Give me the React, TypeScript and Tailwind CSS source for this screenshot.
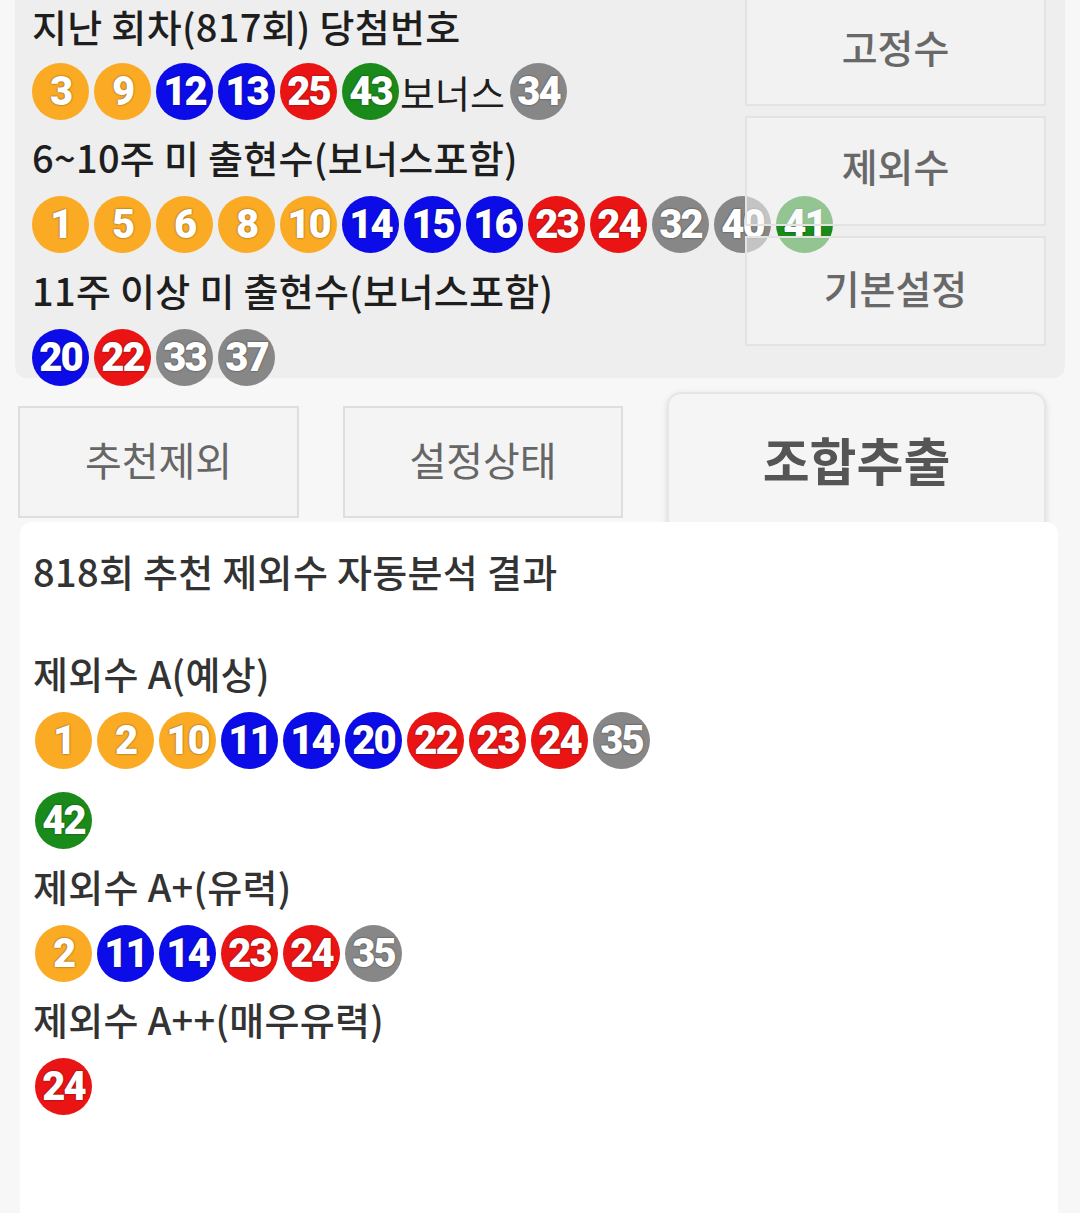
import React from "react";

type Ball = number;

const KR = "font-['Noto_Sans_CJK_KR','Noto_Sans',sans-serif]";

function ballColor(n: number) {
  if (n <= 10) return "bg-[#fbaa24]";
  if (n <= 20) return "bg-[#0c0ce8]";
  if (n <= 30) return "bg-[#ea1414]";
  if (n <= 40) return "bg-[#878787]";
  return "bg-[#1a8a1a]";
}

function LottoBall({ n }: { n: Ball }) {
  return (
    <div
      className={`shrink-0 w-[57px] h-[57px] rounded-full flex items-center justify-center ${ballColor(n)}`}
    >
      <span className="font-['Roboto','Liberation_Sans',sans-serif] font-black text-[40px] leading-none tracking-[-2px] text-white [text-shadow:0_0_2px_rgba(0,0,0,0.6)]">
        {n}
      </span>
    </div>
  );
}

function Title({ children, dark, first }: { children: React.ReactNode; dark?: boolean; first?: boolean }) {
  return (
    <div
      className={`${first ? "h-[51px]" : "h-[56px]"} flex items-center whitespace-nowrap text-[38px] tracking-[0.3px] font-medium ${
        dark ? "text-[#1e1e1e]" : "text-[#333]"
      }`}
    >
      {children}
    </div>
  );
}

function BallRow({ balls, wrap, children }: { balls: Ball[]; wrap?: boolean; children?: React.ReactNode }) {
  return (
    <div
      className={`flex items-center gap-x-[5px] gap-y-[23px] pt-[12px] pb-[8px] ${
        wrap ? "flex-wrap max-w-[630px]" : "flex-nowrap"
      }`}
    >
      {balls.map((b, i) => (
        <LottoBall key={i} n={b} />
      ))}
      {children}
    </div>
  );
}

const sideButtons = ["고정수", "제외수", "기본설정"];

export default function App() {
  return (
    <div className={`h-[1213px] overflow-hidden bg-[#f7f7f7] flex flex-col ${KR}`}>
      {/* Top panel */}
      <div className="mx-[15px] h-[378px] shrink-0 rounded-b-[12px] bg-[#eeeeee] grid grid-cols-[1fr_301px] pr-[19px]">
        <div className="pl-[17px] min-w-0">
          <Title dark first>지난 회차(817회) 당첨번호</Title>
          <BallRow balls={[3, 9, 12, 13, 25, 43]}>
            <span className="text-[38px] text-[#1e1e1e] -ml-[4px] whitespace-nowrap">보너스</span>
            <LottoBall n={34} />
          </BallRow>
          <Title dark>6~10주 미 출현수(보너스포함)</Title>
          <BallRow balls={[1, 5, 6, 8, 10, 14, 15, 16, 23, 24, 32, 40, 41]} />
          <Title dark>11주 이상 미 출현수(보너스포함)</Title>
          <BallRow balls={[20, 22, 33, 37]} />
        </div>
        <div className="relative z-10 flex flex-col gap-[10px]">
          {sideButtons.map((label, i) => (
            <button
              key={label}
              className={`${
                i === 0 ? "h-[106px] border-t-0" : "h-[110px]"
              } w-full border-2 border-[#e3e3e3] bg-[rgba(246,246,246,0.55)] text-[39px] font-medium text-[#686868] flex items-center justify-center ${
                i === 0 ? "pb-[12px]" : i === 1 ? "pb-[12px]" : "pb-[8px]"
              }`}
            >
              {label}
            </button>
          ))}
        </div>
      </div>

      {/* Action buttons */}
      <div className="mt-[14px] h-[130px] shrink-0 flex items-start pl-[18px] gap-[44px]">
        <button className="mt-[14px] w-[281px] h-[112px] border-2 border-[#dedede] bg-[#f4f4f4] text-[40px] text-[#666] flex items-center justify-center pb-[6px]">
          추천제외
        </button>
        <button className="mt-[14px] w-[280px] h-[112px] border-2 border-[#dedede] bg-[#f4f4f4] text-[40px] text-[#666] flex items-center justify-center pb-[6px]">
          설정상태
        </button>
        <button className="w-[379px] h-[150px] shrink-0 rounded-[14px] border-2 border-[#e6e6e6] bg-[#f5f5f5] shadow-[0_2px_6px_rgba(0,0,0,0.12)] text-[51px] font-bold text-[#555] flex items-start justify-center pt-[27px]">
          조합추출
        </button>
      </div>

      {/* Result card */}
      <div className="relative z-10 ml-[20px] w-[1038px] flex-1 rounded-t-[12px] bg-white pl-[13px] pt-[20px]">
        <Title>818회 추천 제외수 자동분석 결과</Title>
        <div className="h-[46px]" />
        <Title>제외수 A(예상)</Title>
        <div className="pl-[2px]">
          <BallRow wrap balls={[1, 2, 10, 11, 14, 20, 22, 23, 24, 35, 42]} />
        </div>
        <Title>제외수 A+(유력)</Title>
        <div className="pl-[2px]">
          <BallRow wrap balls={[2, 11, 14, 23, 24, 35]} />
        </div>
        <Title>제외수 A++(매우유력)</Title>
        <div className="pl-[2px]">
          <BallRow wrap balls={[24]} />
        </div>
      </div>
    </div>
  );
}
